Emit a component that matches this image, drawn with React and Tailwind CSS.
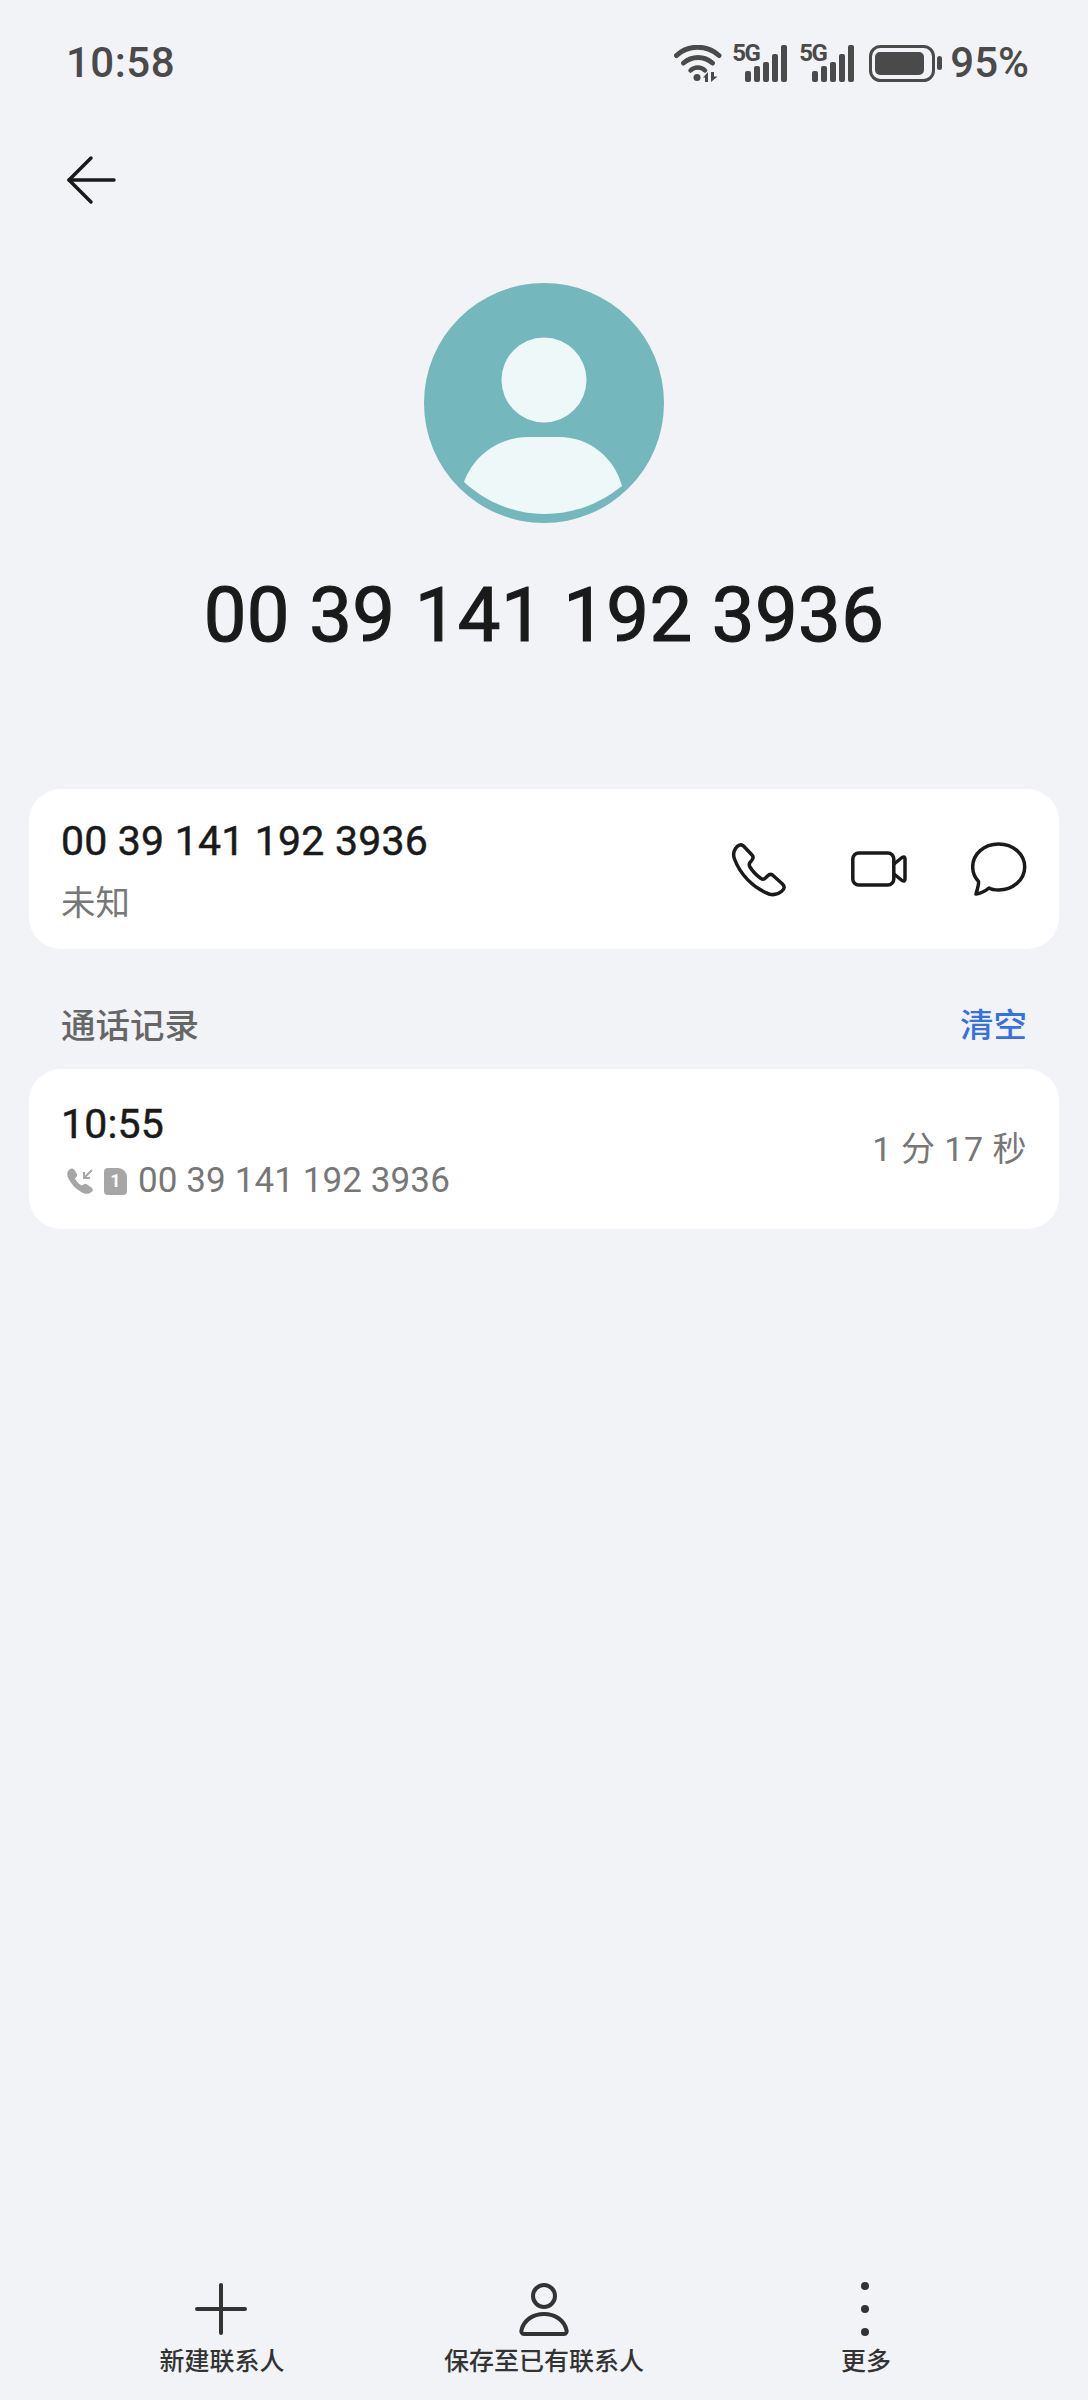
import React from 'react';

const fontStack = 'font-["Roboto","Noto_Sans_CJK_SC",sans-serif]';

const SignalIcon = () => (
  <div className="relative w-[55px] h-[37px]">
    <span className="absolute left-0 top-[-3px] text-[24px] leading-[23px] font-bold tracking-[-1.5px] text-[#4a4a4a]">5G</span>
    <svg className="absolute left-0 top-0" width="55" height="37" viewBox="0 0 55 37" fill="#4a4a4a">
      <rect x="13" y="26" width="6" height="11" rx="2" />
      <rect x="22" y="21" width="6" height="16" rx="2" />
      <rect x="31" y="17" width="6" height="20" rx="2" />
      <rect x="40" y="9" width="6" height="28" rx="2" />
      <rect x="49" y="0" width="6" height="37" rx="2" />
    </svg>
  </div>
);

const StatusBar = () => (
  <div className="flex items-center justify-between h-[126px] pl-[66px] pr-[59px] text-[#4a4a4a]">
    <span className="text-[42px] leading-none font-medium tracking-[0.5px]">10:58</span>
    <div className="flex items-center">
      <svg width="48" height="37" viewBox="0 0 48 37" fill="none" stroke="#4a4a4a" strokeLinecap="round">
        <path d="M2.5 10.5C14 -0.5 33 -0.5 45 10.5" strokeWidth="5" />
        <path d="M9.5 18C18 10.5 30 10.5 38.5 18" strokeWidth="5" />
        <path d="M16.5 25.5C20.5 21.5 27 21.5 31 25.5" strokeWidth="4.5" />
        <circle cx="23" cy="32.5" r="3.5" fill="#4a4a4a" stroke="none" />
        <path d="M34 27V37H31V32.5H29Z" fill="#4a4a4a" stroke="none" />
        <path d="M37 27H40V31.5H43.5L37 37Z" fill="#4a4a4a" stroke="none" />
      </svg>
      <div className="ml-[10px]"><SignalIcon /></div>
      <div className="ml-[12px]"><SignalIcon /></div>
      <svg className="ml-[15px]" width="73" height="37" viewBox="0 0 73 37" fill="none">
        <rect x="1.5" y="1.5" width="63" height="34" rx="10" stroke="#4a4a4a" strokeWidth="3" />
        <rect x="6" y="7" width="49" height="23" rx="5" fill="#4a4a4a" />
        <rect x="68" y="11" width="5" height="14" rx="2.5" fill="#4a4a4a" />
      </svg>
      <span className="ml-[8px] text-[42px] leading-none font-medium">95%</span>
    </div>
  </div>
);

const PhoneIcon = () => (
  <svg width="56" height="56" viewBox="0 0 56 56" fill="none" stroke="#1a1a1a" strokeWidth="3.5" strokeLinejoin="round">
    <path d="M4.5 7.5C6.5 4.5 10 2.5 12.5 5L21 14C22.5 15.5 22.5 17 21 19L19 21.5C18 23 18 24.5 19 26C22 31 25 34 30 37.5C31.5 38.5 33 38.5 34.5 37L36.5 35C38 33.5 40 33 41.5 34L51.5 43C54 45.5 53.5 48 51 50C47.5 53 43 54.5 38 53C22 47 9 33 3.5 18C2 14 2.5 10.5 4.5 7.5Z" />
  </svg>
);

const VideoIcon = () => (
  <svg width="56" height="56" viewBox="0 0 56 56" fill="none" stroke="#1a1a1a" strokeWidth="3.5" strokeLinejoin="round">
    <rect x="1.8" y="12" width="41" height="32" rx="6" />
    <path d="M43 23L51 16.5Q54 15 54 18V38Q54 41 51 39.5L43 33" />
  </svg>
);

const ChatIcon = () => (
  <svg width="56" height="56" viewBox="0 0 56 56" fill="none" stroke="#1a1a1a" strokeWidth="3.5" strokeLinejoin="round">
    <path d="M18 47C20.5 48.5 24 49 27.7 49C41.5 49 53.7 39 53.7 26C53.7 13 42 3 27.7 3C13 3 1.7 13 1.7 26C1.7 31.5 3.7 36.5 7.5 40.5C8 42 6.5 48 5 53C9 52.5 15 49.5 18 47Z" />
  </svg>
);

const Avatar = () => (
  <svg width="240" height="240" viewBox="0 0 240 240">
    <circle cx="120" cy="120" r="120" fill="#74b8be" />
    <circle cx="120" cy="97" r="42.5" fill="#eff8f8" />
    <path d="M40 199C50 172 75 154 105 154H135C165 154 190 174 198 203C175 221 150 231 120 231C90 231 62 219 40 199Z" fill="#eff8f8" />
  </svg>
);

const BottomAction = ({ label, children }) => (
  <div className="flex flex-col items-center">
    <svg width="56" height="56" viewBox="0 0 56 56" fill="none" stroke="#333333" strokeWidth="4" strokeLinecap="round">
      {children}
    </svg>
    <span className="mt-[9px] text-[25px] leading-[32px] font-medium text-[#333333]">{label}</span>
  </div>
);

const App = () => {
  const number = '00 39 141 192 3936';

  return (
    <div className={`flex flex-col h-[2400px] bg-[#f1f3f7] ${fontStack}`}>
      <StatusBar />

      <div className="flex items-center h-[108px] pl-[66px]">
        <svg width="50" height="50" viewBox="0 0 50 50" fill="none" stroke="#1a1a1a" strokeWidth="3.5" strokeLinecap="round" strokeLinejoin="round">
          <path d="M3 25H48" />
          <path d="M25 3L3 25L25 47" />
        </svg>
      </div>

      <div className="flex justify-center mt-[49px]">
        <Avatar />
      </div>

      <div className="mt-[47px] text-center text-[76px] leading-[90px] tracking-[0.4px] [-webkit-text-stroke:1.2px_#1a1a1a] text-[#1a1a1a]">{number}</div>

      <div className="flex items-center justify-between h-[160px] mt-[129px] ml-[29px] mr-[29px] pl-[32px] pr-[32px] bg-white rounded-[32px]">
        <div className="pt-[6px]">
          <div className="text-[41px] leading-[50px] tracking-[0.2px] [-webkit-text-stroke:0.5px_#1a1a1a] text-[#1a1a1a]">{number}</div>
          <div className="mt-[12px] text-[34.5px] leading-[50px] text-[#777777]">未知</div>
        </div>
        <div className="flex items-center gap-[64px]">
          <PhoneIcon />
          <VideoIcon />
          <ChatIcon />
        </div>
      </div>

      <div className="flex items-center justify-between h-[50px] mt-[52px] pl-[61px] pr-[61px]">
        <span className="text-[34.5px] leading-none font-medium text-[#666666]">通话记录</span>
        <span className="text-[33.5px] leading-none font-medium text-[#3670e6]">清空</span>
      </div>

      <div className="flex items-center justify-between h-[160px] mt-[18px] ml-[29px] mr-[29px] pl-[32px] pr-[32px] bg-white rounded-[32px]">
        <div className="pt-[7px]">
          <div className="text-[41px] leading-[50px] tracking-[0.2px] [-webkit-text-stroke:0.5px_#1a1a1a] text-[#1a1a1a]">10:55</div>
          <div className="flex items-center mt-[7px] h-[50px] text-[35px] text-[#777777]">
            <svg className="ml-[6px]" width="27" height="27" viewBox="0 0 27 27" fill="#a6a6a6">
              <path d="M3 1C5 0 6.5 .5 7.5 2L10 6C10.5 7.5 10 8.5 9 9.5L8 10.5C9 13 12 16.5 15 17.5L16.5 16.5C17.5 15.5 19 15.5 20 16.5L25 20C26.5 21.5 26 23 24.5 24C22 26 19 26.5 16 25C9 21.5 4 16 1 9.5C-.5 6 .5 3 3 1Z" />
              <path d="M25 2L17 10M17 4V10H23" fill="none" stroke="#a6a6a6" strokeWidth="2" />
            </svg>
            <div className="flex items-center justify-center w-[23px] h-[27px] ml-[10px] bg-[#a6a6a6] rounded-[4px] rounded-tr-[9px] text-[18px] leading-none font-bold text-white">1</div>
            <span className="ml-[11px] leading-[50px] tracking-[0.1px]">{number}</span>
          </div>
        </div>
        <span className="text-[34px] leading-none tracking-[0.5px] text-[#777777]">1 分 17 秒</span>
      </div>

      <div className="grid grid-cols-3 mt-auto pb-[22px] px-[61px]">
        <BottomAction label="新建联系人">
          <path d="M27 4V52" />
          <path d="M3 28H51" />
        </BottomAction>
        <BottomAction label="保存至已有联系人">
          <circle cx="28" cy="15" r="11" />
          <path d="M8 53C6 53 5 51 5.5 49C8 39 17 33 28 33C39 33 48 39 50.5 49C51 51 50 53 48 53Z" />
        </BottomAction>
        <BottomAction label="更多">
          <circle cx="27" cy="5" r="4" fill="#333333" stroke="none" />
          <circle cx="27" cy="28" r="4" fill="#333333" stroke="none" />
          <circle cx="27" cy="51" r="4" fill="#333333" stroke="none" />
        </BottomAction>
      </div>
    </div>
  );
};

export default App;
